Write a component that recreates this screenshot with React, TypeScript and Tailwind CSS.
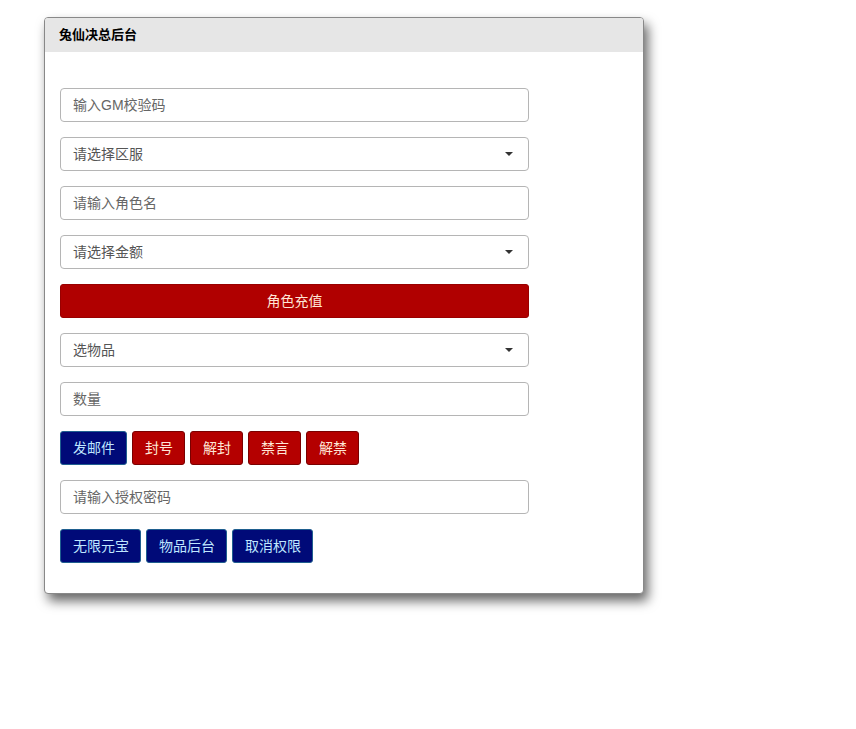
const input =
  "block h-[34px] w-full rounded-[4px] border border-[#b5b5b5] bg-white px-3 text-[14px] text-[#555] outline-none placeholder:text-[#666]";

function Select({ label }: { label: string }) {
  return (
    <div className={`${input} flex items-center justify-between`}>
      <span className="text-[#555]">{label}</span>
      <span className="mr-[3px] h-0 w-0 border-x-[4px] border-t-[4px] border-x-transparent border-t-[#333]" />
    </div>
  );
}

function Btn({
  children,
  tone,
}: {
  children: React.ReactNode;
  tone: "blue" | "red";
}) {
  const cls =
    tone === "blue"
      ? "bg-[#000a78] border-[#1f5f8f] text-[#bfe6ff]"
      : "bg-[#b40000] border-[#7a0000] text-[#ffe6d6]";
  return (
    <button
      type="button"
      className={`h-[34px] rounded-[3px] border pl-3 pr-[11px] text-[14px] leading-none ${cls}`}
    >
      {children}
    </button>
  );
}

export default function App() {
  return (
    <div
      className="min-h-[729px] bg-white pl-[44px] pt-[17px]"
      style={{ fontFamily: '"Liberation Sans", "Noto Sans CJK SC", sans-serif' }}
    >
      <div className="w-[600px] overflow-hidden rounded-[4px] border border-[#888] bg-white shadow-[4px_7px_12px_rgba(0,0,0,0.6)]">
        <div className="flex h-[34px] items-center bg-[#e6e6e6] px-[14px] text-[13px] font-bold text-black">
          兔仙决总后台
        </div>
        <div className="flex w-[484px] flex-col gap-[15px] pb-[30px] pl-[15px] pt-[36px]">
          <input className={input} placeholder="输入GM校验码" />
          <Select label="请选择区服" />
          <input className={input} placeholder="请输入角色名" />
          <Select label="请选择金额" />
          <button
            type="button"
            className="h-[34px] w-full rounded-[3px] border border-[#900] bg-[#b00000] text-[14px] text-[#ffe6d6]"
          >
            角色充值
          </button>
          <Select label="选物品" />
          <input className={input} placeholder="数量" />
          <div className="flex gap-[5px]">
            <Btn tone="blue">发邮件</Btn>
            <Btn tone="red">封号</Btn>
            <Btn tone="red">解封</Btn>
            <Btn tone="red">禁言</Btn>
            <Btn tone="red">解禁</Btn>
          </div>
          <input className={input} placeholder="请输入授权密码" />
          <div className="flex gap-[5px]">
            <Btn tone="blue">无限元宝</Btn>
            <Btn tone="blue">物品后台</Btn>
            <Btn tone="blue">取消权限</Btn>
          </div>
        </div>
      </div>
    </div>
  );
}
